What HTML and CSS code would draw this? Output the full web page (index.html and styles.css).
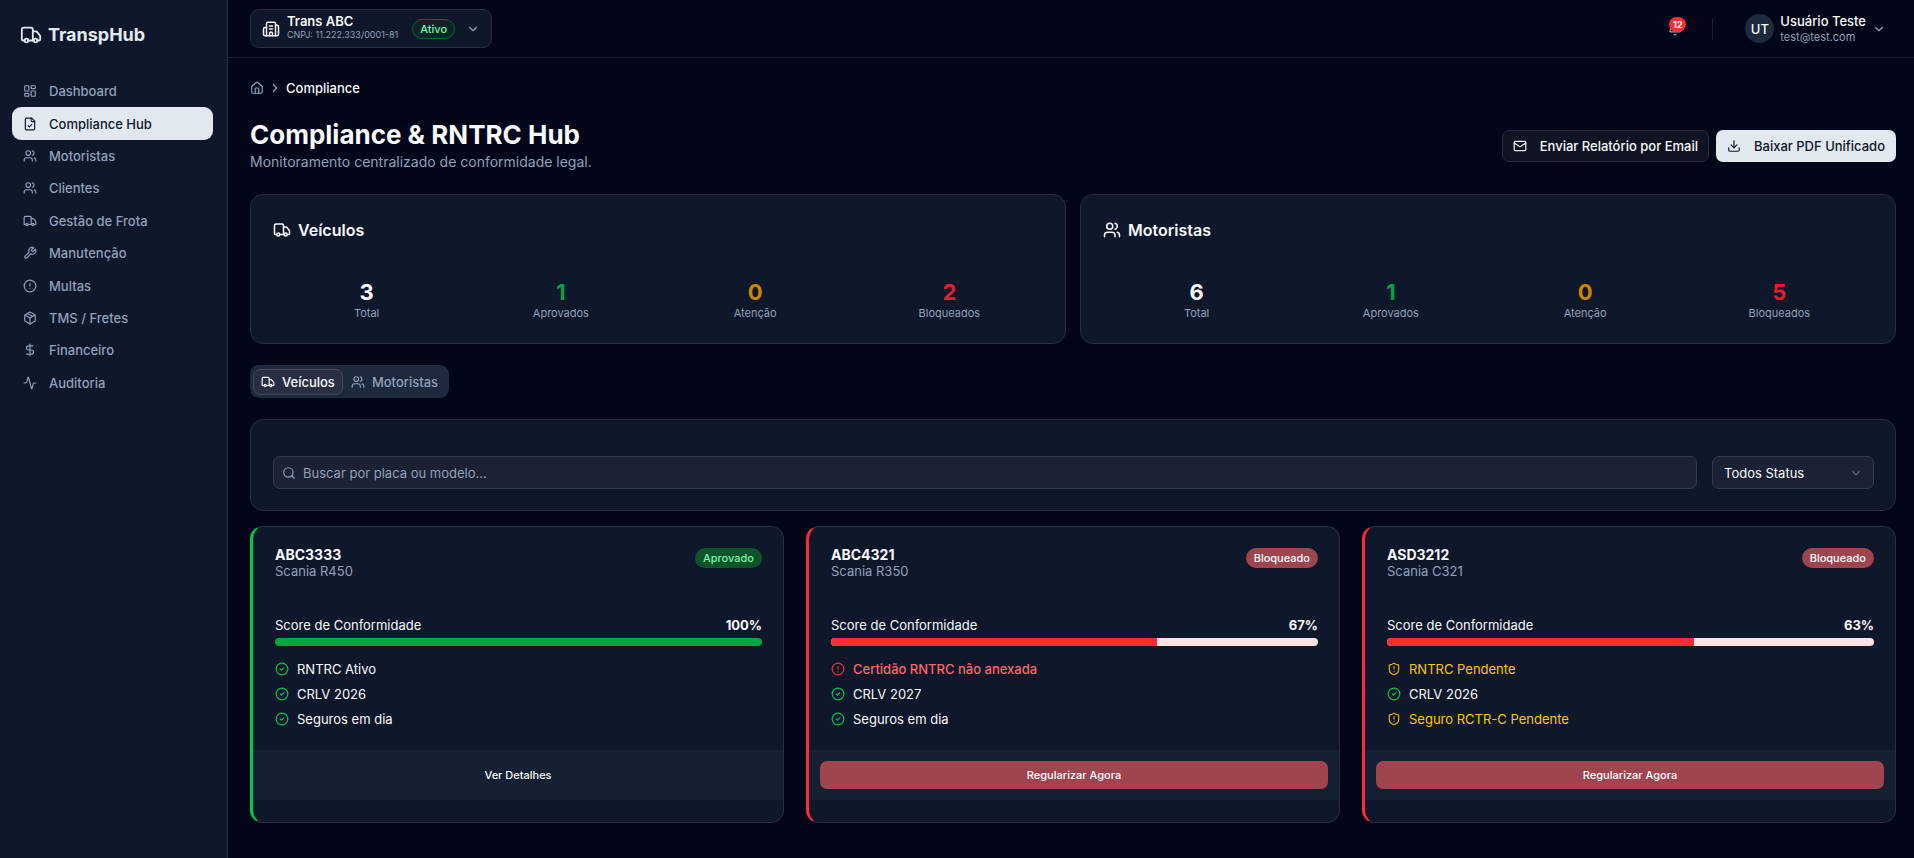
FILE: index.html
```html
<!DOCTYPE html>
<html lang="pt-BR">
<head>
  <meta charset="UTF-8">
  <meta name="viewport" content="width=device-width, initial-scale=1.0">
  <title>Compliance Hub - TranspHub</title>
  <link rel="stylesheet" href="styles.css">
</head>
<body>
  <!-- Shared icons -->
  <svg class="icon-sprite" aria-hidden="true">
    <symbol id="i-truck" viewBox="0 0 24 24">
      <path d="M14 18V6a2 2 0 0 0-2-2H4a2 2 0 0 0-2 2v11a1 1 0 0 0 1 1h2"/>
      <path d="M15 18H9"/>
      <path d="M19 18h2a1 1 0 0 0 1-1v-3.65a1 1 0 0 0-.22-.624l-3.48-4.35A1 1 0 0 0 17.52 8H14"/>
      <circle cx="17" cy="18" r="2"/>
      <circle cx="7" cy="18" r="2"/>
    </symbol>
    <symbol id="i-dashboard" viewBox="0 0 24 24">
      <rect width="7" height="9" x="3" y="3" rx="1"/>
      <rect width="7" height="5" x="14" y="3" rx="1"/>
      <rect width="7" height="9" x="14" y="12" rx="1"/>
      <rect width="7" height="5" x="3" y="16" rx="1"/>
    </symbol>
    <symbol id="i-file-check" viewBox="0 0 24 24">
      <path d="M15 2H6a2 2 0 0 0-2 2v16a2 2 0 0 0 2 2h12a2 2 0 0 0 2-2V7Z"/>
      <path d="M14 2v4a2 2 0 0 0 2 2h4"/>
      <path d="m9 15 2 2 4-4"/>
    </symbol>
    <symbol id="i-users" viewBox="0 0 24 24">
      <path d="M16 21v-2a4 4 0 0 0-4-4H6a4 4 0 0 0-4 4v2"/>
      <circle cx="9" cy="7" r="4"/>
      <path d="M22 21v-2a4 4 0 0 0-3-3.87"/>
      <path d="M16 3.13a4 4 0 0 1 0 7.75"/>
    </symbol>
    <symbol id="i-wrench" viewBox="0 0 24 24">
      <path d="M14.7 6.3a1 1 0 0 0 0 1.4l1.6 1.6a1 1 0 0 0 1.4 0l3.77-3.77a6 6 0 0 1-7.94 7.94l-6.91 6.91a2.12 2.12 0 0 1-3-3l6.91-6.91a6 6 0 0 1 7.94-7.94l-3.76 3.76z"/>
    </symbol>
    <symbol id="i-alert" viewBox="0 0 24 24">
      <circle cx="12" cy="12" r="10"/>
      <path d="M12 8v4"/>
      <path d="M12 16h.01"/>
    </symbol>
    <symbol id="i-package" viewBox="0 0 24 24">
      <path d="M11 21.73a2 2 0 0 0 2 0l7-4A2 2 0 0 0 21 16V8a2 2 0 0 0-1-1.73l-7-4a2 2 0 0 0-2 0l-7 4A2 2 0 0 0 3 8v8a2 2 0 0 0 1 1.73z"/>
      <path d="M12 22V12"/>
      <path d="M3.29 7 12 12l8.71-5"/>
      <path d="m7.5 4.27 9 5.15"/>
    </symbol>
    <symbol id="i-dollar" viewBox="0 0 24 24">
      <path d="M12 2v20"/>
      <path d="M17 5H9.5a3.5 3.5 0 0 0 0 7h5a3.5 3.5 0 0 1 0 7H6"/>
    </symbol>
    <symbol id="i-activity" viewBox="0 0 24 24">
      <path d="M22 12h-2.48a2 2 0 0 0-1.93 1.46l-2.35 8.36a.25.25 0 0 1-.48 0L9.24 2.18a.25.25 0 0 0-.48 0l-2.35 8.36A2 2 0 0 1 4.49 12H2"/>
    </symbol>
    <symbol id="i-building" viewBox="0 0 24 24">
      <path d="M10 12h4"/>
      <path d="M10 8h4"/>
      <path d="M14 21v-3a2 2 0 0 0-4 0v3"/>
      <path d="M6 10H4a2 2 0 0 0-2 2v7a2 2 0 0 0 2 2h16a2 2 0 0 0 2-2V9a2 2 0 0 0-2-2h-2"/>
      <path d="M6 21V5a2 2 0 0 1 2-2h8a2 2 0 0 1 2 2v16"/>
    </symbol>
    <symbol id="i-chevron-down" viewBox="0 0 24 24">
      <path d="m6 9 6 6 6-6"/>
    </symbol>
    <symbol id="i-chevron-right" viewBox="0 0 24 24">
      <path d="m9 18 6-6-6-6"/>
    </symbol>
    <symbol id="i-home" viewBox="0 0 24 24">
      <path d="M15 21v-8a1 1 0 0 0-1-1h-4a1 1 0 0 0-1 1v8"/>
      <path d="M3 10a2 2 0 0 1 .709-1.528l7-6a2 2 0 0 1 2.582 0l7 6A2 2 0 0 1 21 10v9a2 2 0 0 1-2 2H5a2 2 0 0 1-2-2z"/>
    </symbol>
    <symbol id="i-bell" viewBox="0 0 24 24">
      <path d="M10.268 21a2 2 0 0 0 3.464 0"/>
      <path d="M3.262 15.326A1 1 0 0 0 4 17h16a1 1 0 0 0 .74-1.673C19.41 13.956 18 12.499 18 8A6 6 0 0 0 6 8c0 4.499-1.411 5.956-2.738 7.326"/>
    </symbol>
    <symbol id="i-mail" viewBox="0 0 24 24">
      <rect width="20" height="16" x="2" y="4" rx="2"/>
      <path d="m22 7-8.991 5.727a2 2 0 0 1-2.009 0L2 7"/>
    </symbol>
    <symbol id="i-download" viewBox="0 0 24 24">
      <path d="M21 15v4a2 2 0 0 1-2 2H5a2 2 0 0 1-2-2v-4"/>
      <path d="m7 10 5 5 5-5"/>
      <path d="M12 15V3"/>
    </symbol>
    <symbol id="i-search" viewBox="0 0 24 24">
      <circle cx="11" cy="11" r="8"/>
      <path d="m21 21-4.3-4.3"/>
    </symbol>
    <symbol id="i-check" viewBox="0 0 24 24">
      <circle cx="12" cy="12" r="10"/>
      <path d="m9 12 2 2 4-4"/>
    </symbol>
    <symbol id="i-shield" viewBox="0 0 24 24">
      <path d="M20 13c0 5-3.5 7.5-7.66 8.95a1 1 0 0 1-.67-.01C7.5 20.5 4 18 4 13V6a1 1 0 0 1 1-1c2 0 4.5-1.2 6.24-2.72a1.17 1.17 0 0 1 1.52 0C14.51 3.81 17 5 19 5a1 1 0 0 1 1 1z"/>
      <path d="M12 8v4"/>
      <path d="M12 16h.01"/>
    </symbol>
  </svg>

  <div class="layout">
    <aside class="sidebar">
      <a class="brand" href="#"><svg class="icon icon-xl"><use href="#i-truck"/></svg>TranspHub</a>
      <nav class="nav">
        <a class="nav-link" href="#"><svg class="icon"><use href="#i-dashboard"/></svg>Dashboard</a>
        <a class="nav-link active" href="#" aria-current="page"><svg class="icon"><use href="#i-file-check"/></svg>Compliance Hub</a>
        <a class="nav-link" href="#"><svg class="icon"><use href="#i-users"/></svg>Motoristas</a>
        <a class="nav-link" href="#"><svg class="icon"><use href="#i-users"/></svg>Clientes</a>
        <a class="nav-link" href="#"><svg class="icon"><use href="#i-truck"/></svg>Gestão de Frota</a>
        <a class="nav-link" href="#"><svg class="icon"><use href="#i-wrench"/></svg>Manutenção</a>
        <a class="nav-link" href="#"><svg class="icon"><use href="#i-alert"/></svg>Multas</a>
        <a class="nav-link" href="#"><svg class="icon"><use href="#i-package"/></svg>TMS / Fretes</a>
        <a class="nav-link" href="#"><svg class="icon"><use href="#i-dollar"/></svg>Financeiro</a>
        <a class="nav-link" href="#"><svg class="icon"><use href="#i-activity"/></svg>Auditoria</a>
      </nav>
    </aside>

    <div class="main">
      <header class="topbar">
        <button class="company" type="button">
          <svg class="icon icon-lg"><use href="#i-building"/></svg>
          <span class="company-info">
            <span class="company-name">Trans ABC</span>
            <span class="company-doc">CNPJ: 11.222.333/0001-81</span>
          </span>
          <span class="badge badge-active">Ativo</span>
          <svg class="icon muted"><use href="#i-chevron-down"/></svg>
        </button>

        <div class="topbar-right">
          <button class="bell" type="button" aria-label="Notificações">
            <svg class="icon muted"><use href="#i-bell"/></svg>
            <span class="bell-count">12</span>
          </button>
          <span class="divider"></span>
          <button class="user" type="button">
            <span class="avatar">UT</span>
            <span class="user-info">
              <span class="user-name">Usuário Teste</span>
              <span class="user-email">test@test.com</span>
            </span>
            <svg class="icon muted"><use href="#i-chevron-down"/></svg>
          </button>
        </div>
      </header>

      <main class="content">
        <nav class="breadcrumb">
          <a class="crumb-home" href="#" aria-label="Início"><svg class="icon"><use href="#i-home"/></svg></a>
          <svg class="icon"><use href="#i-chevron-right"/></svg>
          <span class="crumb-current">Compliance</span>
        </nav>

        <div class="page-head">
          <div>
            <h1>Compliance &amp; RNTRC Hub</h1>
            <p class="subtitle">Monitoramento centralizado de conformidade legal.</p>
          </div>
          <div class="actions">
            <button class="btn btn-outline" type="button"><svg class="icon"><use href="#i-mail"/></svg>Enviar Relatório por Email</button>
            <button class="btn btn-primary" type="button"><svg class="icon"><use href="#i-download"/></svg>Baixar PDF Unificado</button>
          </div>
        </div>

        <div class="summary">
          <section class="card summary-card">
            <h2><svg class="icon icon-lg"><use href="#i-truck"/></svg>Veículos</h2>
            <div class="stats">
              <div class="stat"><span class="stat-value">3</span><span class="stat-label">Total</span></div>
              <div class="stat"><span class="stat-value ok">1</span><span class="stat-label">Aprovados</span></div>
              <div class="stat"><span class="stat-value warn">0</span><span class="stat-label">Atenção</span></div>
              <div class="stat"><span class="stat-value bad">2</span><span class="stat-label">Bloqueados</span></div>
            </div>
          </section>
          <section class="card summary-card">
            <h2><svg class="icon icon-lg"><use href="#i-users"/></svg>Motoristas</h2>
            <div class="stats">
              <div class="stat"><span class="stat-value">6</span><span class="stat-label">Total</span></div>
              <div class="stat"><span class="stat-value ok">1</span><span class="stat-label">Aprovados</span></div>
              <div class="stat"><span class="stat-value warn">0</span><span class="stat-label">Atenção</span></div>
              <div class="stat"><span class="stat-value bad">5</span><span class="stat-label">Bloqueados</span></div>
            </div>
          </section>
        </div>

        <div class="tabs" role="tablist">
          <button class="tab active" type="button" role="tab" aria-selected="true"><svg class="icon"><use href="#i-truck"/></svg>Veículos</button>
          <button class="tab" type="button" role="tab" aria-selected="false"><svg class="icon"><use href="#i-users"/></svg>Motoristas</button>
        </div>

        <div class="card filters">
          <label class="search">
            <svg class="icon"><use href="#i-search"/></svg>
            <input type="text" aria-label="Buscar" placeholder="Buscar por placa ou modelo...">
          </label>
          <label class="select">
            <select aria-label="Status">
              <option>Todos Status</option>
              <option>Aprovado</option>
              <option>Bloqueado</option>
            </select>
            <svg class="icon"><use href="#i-chevron-down"/></svg>
          </label>
        </div>

        <div class="vehicles">
          <article class="card vehicle vehicle-ok">
            <div class="vehicle-head">
              <div>
                <h3>ABC3333</h3>
                <p class="model">Scania R450</p>
              </div>
              <span class="badge badge-ok">Aprovado</span>
            </div>
            <div class="vehicle-body">
              <div class="score"><span>Score de Conformidade</span><strong>100%</strong></div>
              <div class="bar"><div class="bar-fill" style="width: 100%"></div></div>
              <ul class="checks">
                <li class="check-ok"><svg class="icon"><use href="#i-check"/></svg>RNTRC Ativo</li>
                <li class="check-ok"><svg class="icon"><use href="#i-check"/></svg>CRLV 2026</li>
                <li class="check-ok"><svg class="icon"><use href="#i-check"/></svg>Seguros em dia</li>
              </ul>
            </div>
            <div class="vehicle-foot"><button class="btn-sm" type="button">Ver Detalhes</button></div>
          </article>

          <article class="card vehicle vehicle-bad">
            <div class="vehicle-head">
              <div>
                <h3>ABC4321</h3>
                <p class="model">Scania R350</p>
              </div>
              <span class="badge badge-bad">Bloqueado</span>
            </div>
            <div class="vehicle-body">
              <div class="score"><span>Score de Conformidade</span><strong>67%</strong></div>
              <div class="bar"><div class="bar-fill" style="width: 67%"></div></div>
              <ul class="checks">
                <li class="check-bad"><svg class="icon"><use href="#i-alert"/></svg>Certidão RNTRC não anexada</li>
                <li class="check-ok"><svg class="icon"><use href="#i-check"/></svg>CRLV 2027</li>
                <li class="check-ok"><svg class="icon"><use href="#i-check"/></svg>Seguros em dia</li>
              </ul>
            </div>
            <div class="vehicle-foot"><button class="btn-sm btn-danger" type="button">Regularizar Agora</button></div>
          </article>

          <article class="card vehicle vehicle-bad">
            <div class="vehicle-head">
              <div>
                <h3>ASD3212</h3>
                <p class="model">Scania C321</p>
              </div>
              <span class="badge badge-bad">Bloqueado</span>
            </div>
            <div class="vehicle-body">
              <div class="score"><span>Score de Conformidade</span><strong>63%</strong></div>
              <div class="bar"><div class="bar-fill" style="width: 63%"></div></div>
              <ul class="checks">
                <li class="check-warn"><svg class="icon"><use href="#i-shield"/></svg>RNTRC Pendente</li>
                <li class="check-ok"><svg class="icon"><use href="#i-check"/></svg>CRLV 2026</li>
                <li class="check-warn"><svg class="icon"><use href="#i-shield"/></svg>Seguro RCTR-C Pendente</li>
              </ul>
            </div>
            <div class="vehicle-foot"><button class="btn-sm btn-danger" type="button">Regularizar Agora</button></div>
          </article>
        </div>
      </main>
    </div>
  </div>
</body>
</html>
```

FILE: styles.css
```css
* {
  box-sizing: border-box;
}

body {
  margin: 0;
  font-family: Inter, "Liberation Sans", sans-serif;
  font-size: 13px;
  line-height: 18px;
  background-color: #020618;
  color: #f8fafc;
}

h1, h2, h3, p, ul {
  margin: 0;
  padding: 0;
}

a {
  color: inherit;
  text-decoration: none;
}

button, input, select {
  font: inherit;
  color: inherit;
}

button {
  cursor: pointer;
}

.icon-sprite {
  display: none;
}

.icon {
  width: 14px;
  height: 14px;
  flex-shrink: 0;
  fill: none;
  stroke: currentColor;
  stroke-width: 2;
  stroke-linecap: round;
  stroke-linejoin: round;
}

.icon-lg {
  width: 18px;
  height: 18px;
}

.icon-xl {
  width: 22px;
  height: 22px;
}

.muted {
  color: #90a1b9;
}

.layout {
  display: flex;
  min-height: 100vh;
}

/* Sidebar */
.sidebar {
  width: 228px;
  flex-shrink: 0;
  padding: 21px 14px 20px 12px;
  background-color: #0f172b;
  border-right: 1px solid #272e40;
}

.brand {
  display: flex;
  align-items: center;
  gap: 6px;
  height: 28px;
  margin-bottom: 26px;
  padding-left: 8px;
  font-size: 18px;
  font-weight: 700;
  color: #e2e8f0;
}

.nav {
  display: grid;
  grid-auto-rows: 1fr;
  height: 324px;
}

.nav-link {
  display: flex;
  align-items: center;
  gap: 12px;
  padding: 0 11px;
  border-radius: 9px;
  font-weight: 500;
  color: #90a1b9;
}

.nav-link:hover {
  color: #f8fafc;
}

.nav-link.active {
  background-color: #e2e8f0;
  color: #0f172b;
}

/* Top bar */
.main {
  flex: 1;
  min-width: 0;
}

.topbar {
  display: flex;
  align-items: center;
  justify-content: space-between;
  height: 58px;
  padding: 0 18px 0 22px;
  border-bottom: 1px solid #1b1f2f;
}

.company {
  display: flex;
  align-items: center;
  height: 39px;
  padding: 0 11px;
  background-color: #0f172b;
  border: 1px solid #272e40;
  border-radius: 9px;
  text-align: left;
}

.company-info {
  display: flex;
  flex-direction: column;
  margin: 0 14px 0 7px;
  padding-bottom: 3px;
}

.company-name {
  font-weight: 600;
  line-height: 16px;
}

.company-doc {
  font-size: 9px;
  line-height: 12px;
  color: #90a1b9;
}

.company .badge {
  margin-right: 11px;
}

.badge {
  display: inline-flex;
  align-items: center;
  height: 20px;
  padding: 0 8px;
  border-radius: 10px;
  font-size: 11px;
  font-weight: 500;
}

.badge-active {
  padding: 0 7px;
  background-color: #0e2429;
  border: 1px solid #016630;
  color: #7bf1a8;
}

.badge-ok {
  background-color: #0d542b;
  color: #7bf1a8;
}

.badge-bad {
  background-color: #9f454f;
  color: #ffffff;
}

.topbar-right {
  display: flex;
  align-items: center;
}

.bell {
  position: relative;
  display: flex;
  padding: 9px;
  background: none;
  border: none;
}

.bell-count {
  position: absolute;
  top: 4px;
  right: 5px;
  padding: 0 3px;
  min-width: 17px;
  border-radius: 8px;
  background-color: #fb2c36;
  color: #ffffff;
  font-size: 9px;
  font-weight: 700;
  line-height: 15px;
  text-align: center;
}

.divider {
  width: 1px;
  height: 22px;
  margin: 0 22px 0 21px;
  background-color: #1b1f2f;
}

.user {
  display: flex;
  align-items: center;
  gap: 6px;
  padding: 0 10px;
  background: none;
  border: none;
  text-align: left;
}

.avatar {
  display: flex;
  align-items: center;
  justify-content: center;
  width: 29px;
  height: 29px;
  border-radius: 50%;
  background-color: #1d293d;
  font-weight: 500;
}

.user-info {
  display: flex;
  flex-direction: column;
}

.user-name {
  font-weight: 500;
  line-height: 16px;
}

.user-email {
  font-size: 11px;
  line-height: 16px;
  color: #90a1b9;
}

/* Page */
.content {
  padding: 21px 18px 35px 22px;
}

.breadcrumb {
  display: flex;
  align-items: center;
  gap: 4px;
  height: 18px;
  margin-bottom: 22px;
  color: #90a1b9;
}

.crumb-home {
  display: flex;
}

.crumb-current {
  font-weight: 500;
  color: #f8fafc;
}

.page-head {
  display: flex;
  align-items: center;
  justify-content: space-between;
  margin-bottom: 21px;
}

h1 {
  font-size: 26px;
  font-weight: 700;
  line-height: 32px;
}

.subtitle {
  font-size: 14px;
  line-height: 22px;
  color: #90a1b9;
}

.actions {
  display: flex;
  gap: 7px;
}

.btn {
  display: flex;
  align-items: center;
  gap: 13px;
  height: 32px;
  padding: 0 10px;
  border: 1px solid transparent;
  border-radius: 7px;
  font-weight: 500;
}

.btn-outline {
  background-color: #0f1322;
  border-color: #272a39;
}

.btn-primary {
  background-color: #e2e8f0;
  color: #0f172b;
}

.card {
  background-color: #0f172b;
  border: 1px solid #272e40;
  border-radius: 13px;
}

.summary {
  display: grid;
  grid-template-columns: 1fr 1fr;
  gap: 14px;
  margin-bottom: 21px;
}

.summary-card {
  padding: 22px 22px 23px;
}

.summary-card h2 {
  display: flex;
  align-items: center;
  gap: 7px;
  margin-bottom: 35px;
  font-size: 16px;
  font-weight: 600;
  line-height: 26px;
}

.stats {
  display: grid;
  grid-template-columns: repeat(4, 1fr);
  gap: 7px;
}

.stat {
  display: flex;
  flex-direction: column;
  text-align: center;
}

.stat-value {
  font-size: 22px;
  font-weight: 700;
  line-height: 28px;
}

.stat-label {
  font-size: 11px;
  line-height: 14px;
  color: #90a1b9;
}

.ok {
  color: #00a63e;
}

.warn {
  color: #d08700;
}

.bad {
  color: #e81c2a;
}

/* Tabs */
.tabs {
  display: inline-flex;
  align-items: center;
  height: 33px;
  padding: 3px;
  margin-bottom: 21px;
  border-radius: 9px;
  background-color: #1d293d;
  vertical-align: top;
}

.tab {
  display: flex;
  align-items: center;
  gap: 7px;
  height: 26px;
  padding: 0 7px;
  background: none;
  border: 1px solid transparent;
  border-radius: 7px;
  font-weight: 500;
  color: #90a1b9;
}

.tab.active {
  background-color: #282f42;
  border-color: #434a5b;
  color: #f8fafc;
}

/* Filters */
.filters {
  display: flex;
  gap: 15px;
  padding: 36px 21px 21px 22px;
  margin-bottom: 15px;
}

.search {
  display: flex;
  align-items: center;
  gap: 7px;
  flex: 1;
  height: 33px;
  padding: 0 8px;
  background-color: #1b2235;
  border: 1px solid #333a4b;
  border-radius: 7px;
  color: #90a1b9;
}

.search input {
  flex: 1;
  padding: 0;
  background: none;
  border: none;
  outline: none;
  color: #f8fafc;
}

.search input::placeholder {
  color: #90a1b9;
  opacity: 1;
}

.select {
  display: grid;
  align-items: center;
  width: 162px;
  height: 33px;
}

.select select,
.select .icon {
  grid-area: 1 / 1;
}

.select select {
  appearance: none;
  width: 100%;
  height: 33px;
  padding: 0 11px;
  background-color: #1b2235;
  border: 1px solid #333a4b;
  border-radius: 7px;
}

.select .icon {
  justify-self: end;
  margin-right: 11px;
  color: #566074;
  pointer-events: none;
}

/* Vehicle cards */
.vehicles {
  display: grid;
  grid-template-columns: repeat(3, 1fr);
  gap: 22px;
}

.vehicle {
  border-left-width: 3px;
  padding: 21px 0 22px;
}

.vehicle-ok {
  border-left-color: #00c950;
}

.vehicle-bad {
  border-left-color: #fb2c36;
}

.vehicle-head {
  display: flex;
  align-items: flex-start;
  justify-content: space-between;
  padding: 0 21px 0 22px;
  margin-bottom: 36px;
}

h3 {
  font-size: 14px;
  font-weight: 700;
  line-height: 14px;
}

.model {
  color: #90a1b9;
}

.vehicle-body {
  padding: 0 21px 0 22px;
}

.score {
  display: flex;
  justify-content: space-between;
  margin-bottom: 4px;
}

.score strong {
  font-weight: 700;
}

.bar {
  height: 8px;
  border-radius: 4px;
  overflow: hidden;
  background-color: #ffe2e2;
}

.bar-fill {
  height: 100%;
  background-color: #fb2c36;
}

.vehicle-ok .bar-fill {
  background-color: #00a63e;
}

.checks {
  display: grid;
  gap: 7px;
  margin: 14px 0 22px;
  list-style: none;
}

.checks li {
  display: flex;
  align-items: center;
  gap: 8px;
}

.check-ok .icon {
  color: #00c950;
}

.check-bad {
  font-weight: 500;
  color: #ff6467;
}

.check-bad .icon {
  color: #fb2c36;
}

.check-warn {
  color: #fdc700;
}

.check-warn .icon {
  color: #f0b100;
}

.vehicle-foot {
  padding: 11px;
  background-color: #162033;
}

.btn-sm {
  display: block;
  width: 100%;
  height: 28px;
  background: none;
  border: none;
  border-radius: 7px;
  font-size: 11px;
  font-weight: 500;
}

.btn-danger {
  background-color: #9f454f;
  color: #ffffff;
}
```
